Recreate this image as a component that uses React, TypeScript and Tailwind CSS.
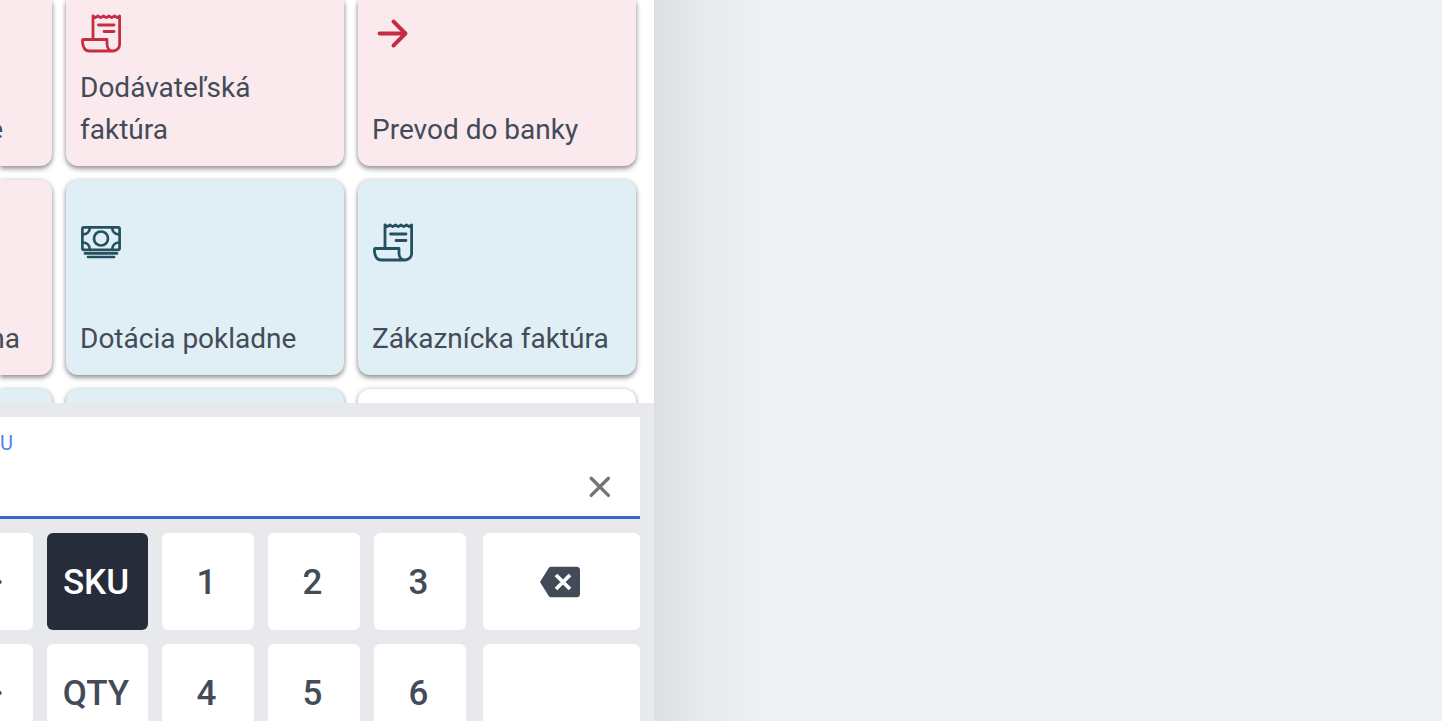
import { ReactNode } from 'react'

type Tone = 'red' | 'blue' | 'white'

const tones: Record<Tone, string> = {
  red: 'bg-[#faeaed] text-[#c42d42]',
  blue: 'bg-[#e0eff6] text-[#24505f]',
  white: 'bg-white text-[#24505f]',
}

function ReceiptIcon() {
  return (
    <svg viewBox="0 0 42 42" className="size-[42px]" fill="none" stroke="currentColor" strokeWidth="2.8" strokeLinecap="round" strokeLinejoin="round" aria-hidden="true">
      <path d="M13 27.5V4l2.3 1.6L18 4l2.7 1.6L23.500 4l2.7 1.6L29 4l2.700 1.600L34.500 4l2.700 1.600L39.600 4v28.500a6.500 6.500 0 0 1-6.500 6.500H9.500C5 39 2.400 35.500 2.400 28.500a1 1 0 0 1 1-1H27v4.500c0 4 2.500 6.800 5.500 7" />
      <path d="M18.500 13H34M24 19.500h10" />
    </svg>
  )
}

function CashIcon() {
  return (
    <svg viewBox="0 0 42 42" className="size-[42px]" fill="none" stroke="currentColor" strokeWidth="2.7" strokeLinecap="round" aria-hidden="true">
      <rect x="2.400" y="6.400" width="37.200" height="22.400" rx="1.500" />
      <circle cx="21" cy="17.500" r="7" />
      <path d="M2.500 13.500c4.500 0 7.300-2.800 7.300-7M39.500 13.500c-4.500 0-7.300-2.800-7.300-7M2.500 21.500c4.500 0 7.300 2.800 7.300 7M39.500 21.500c-4.500 0-7.300 2.800-7.300 7M5 32.400h32M8 36h26" />
    </svg>
  )
}

function ArrowIcon() {
  return (
    <svg viewBox="0 0 42 42" className="size-[42px]" fill="none" stroke="currentColor" strokeWidth="3.9" strokeLinecap="round" strokeLinejoin="round" aria-hidden="true">
      <path d="M7.500 21.500h26M21.500 9.500l12 12-12 12" />
    </svg>
  )
}

type TileProps = {
  tone: Tone
  className?: string
  icon?: ReactNode
  label?: string
  edge?: boolean
}

function Tile({ tone, className = 'rounded-xl px-[14px]', icon, label, edge }: TileProps) {
  return (
    <button
      type="button"
      className={`flex flex-col justify-end pb-[15px] text-left shadow-[0_3px_5px_rgba(0,0,0,0.36),0_0_5px_rgba(0,0,0,0.18)] ${tones[tone]} ${className}`}
    >
      {icon}
      {label && (
        <span className={`mt-[13px] flex min-h-[84px] w-full items-end text-[28px] leading-[42px] text-[#444b58] ${edge ? 'justify-end' : ''}`}>
          {label}
        </span>
      )}
    </button>
  )
}

type KeyProps = {
  children?: ReactNode
  active?: boolean
  className?: string
  label?: string
}

function Key({ children, active, className = 'rounded-md pt-1 pr-[3px]', label }: KeyProps) {
  return (
    <button
      type="button"
      aria-label={label}
      className={`flex h-[97px] items-center justify-center text-[35px] font-medium ${active ? 'bg-[#262c39] text-white' : 'bg-white text-[#444b58]'} ${className}`}
    >
      {children}
    </button>
  )
}

function ArrowKey() {
  return (
    <Key label="Posun" className="justify-end overflow-hidden rounded-r-md pr-[31px]">
      <svg viewBox="0 0 24 24" className="size-6 shrink-0" fill="currentColor" aria-hidden="true">
        <path d="M14 2.500l9.500 8.500v2L14 21.500z" />
      </svg>
    </Key>
  )
}

const keyRows = [
  { mode: 'SKU', active: true, digits: ['1', '2', '3'] },
  { mode: 'QTY', active: false, digits: ['4', '5', '6'] },
]

export default function App() {
  return (
    <div className="flex h-screen overflow-hidden bg-[#eff0f4] font-[Roboto,sans-serif]">
      <main className="flex w-[654px] shrink-0 flex-col bg-white">
        <section className="grid shrink-0 grid-cols-[52px_278px_278px] grid-rows-[166px_195px_14px] gap-[14px] overflow-hidden">
          <Tile tone="red" className="rounded-br-xl pr-[49px]" label="e" edge />
          <Tile tone="red" className="rounded-b-xl px-[14px]" icon={<ReceiptIcon />} label="Dodávateľská faktúra" />
          <Tile tone="red" className="rounded-b-xl px-[14px]" icon={<ArrowIcon />} label="Prevod do banky" />
          <Tile tone="red" className="rounded-r-xl pr-[32px]" label="na" edge />
          <Tile tone="blue" icon={<CashIcon />} label="Dotácia pokladne" />
          <Tile tone="blue" icon={<ReceiptIcon />} label="Zákaznícka faktúra" />
          <Tile tone="blue" className="rounded-tr-xl" />
          <Tile tone="blue" className="rounded-t-xl" />
          <Tile tone="white" className="rounded-t-xl" />
        </section>

        <section className="flex flex-1 flex-col gap-[14px] bg-[#e8e9ed] pt-[14px] pr-[14px]">
          <div className="flex shrink-0 flex-col border-b-[3px] border-[#3866d0] bg-white">
            <label htmlFor="sku" className="mt-3 h-7 text-[20px] leading-7 text-[#5283e4]">
              U
            </label>
            <div className="flex h-[59px] items-center pt-px pr-5">
              <input id="sku" type="text" className="h-full min-w-0 flex-1 text-[28px] text-[#444b58] outline-none" />
              <button type="button" aria-label="Vymazať" className="flex size-10 items-center justify-center text-[#757575]">
                <svg viewBox="0 0 24 24" className="size-6" fill="none" stroke="currentColor" strokeWidth="3.4" strokeLinecap="round" aria-hidden="true">
                  <path d="M3.200 3.200l17.200 17.200M20.400 3.200L3.200 20.400" />
                </svg>
              </button>
            </div>
          </div>

          {keyRows.map((row) => (
            <div key={row.mode} className="flex shrink-0 gap-[17px]">
              <div className="grid grid-cols-[33px_101px_92px_92px_92px] gap-[14px]">
                <ArrowKey />
                <Key active={row.active}>{row.mode}</Key>
                {row.digits.map((digit) => (
                  <Key key={digit}>{digit}</Key>
                ))}
              </div>
              {row.active ? (
                <Key label="Zmazať znak" className="flex-1 rounded-md pr-[3px]">
                  <svg viewBox="0 0 42 32" className="h-8 w-[42px]" aria-hidden="true">
                    <path d="M12 0.800h25.500a3.500 3.500 0 0 1 3.500 3.500v23.400a3.500 3.500 0 0 1-3.500 3.500H12q-1.500 0-2.300-1.200L1 16l8.700-14q.8-1.200 2.300-1.200z" fill="currentColor" />
                    <path d="M17 9l14 14M31 9L17 23" fill="none" stroke="white" strokeWidth="3.800" />
                  </svg>
                </Key>
              ) : (
                <Key label="Potvrdiť" className="flex-1 rounded-md" />
              )}
            </div>
          ))}
        </section>
      </main>
      {/* soft panel shadow */}
      <div className="w-[110px] shrink-0 bg-linear-to-r from-[#dddee2] via-[#e8e9ed] via-40% to-[#eff0f4]" />
    </div>
  )
}
